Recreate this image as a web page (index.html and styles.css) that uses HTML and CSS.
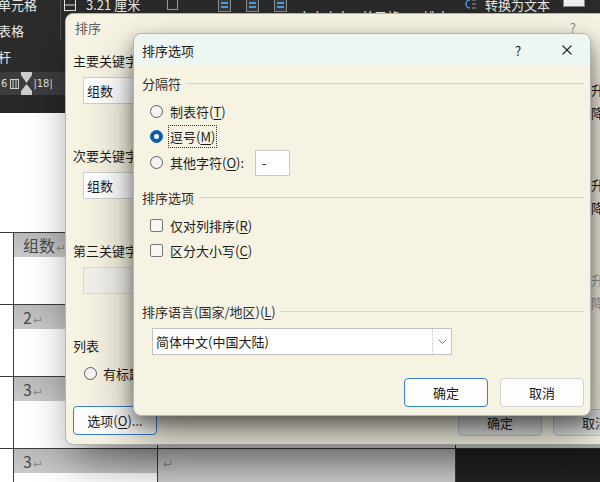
FILE: index.html
```html
<!DOCTYPE html>
<html lang="zh-CN">
<head>
  <meta charset="UTF-8">
  <meta name="viewport" content="width=device-width, initial-scale=1.0">
  <title>排序选项</title>
  <link rel="stylesheet" href="styles.css">
</head>
<body>
  <div class="screen">
    <div class="word">
      <div class="ribbon">
        <div class="rb-first">
          <span>单元格</span>
          <span>表格</span>
          <span>杆</span>
        </div>
        <div class="rb-sep"></div>
        <svg class="rb-icon rb-cell" width="14" height="14" viewBox="0 0 14 14">
          <rect x="1.5" y="1.5" width="11" height="11" fill="none" stroke="#e0e0e0"/>
          <line x1="1.5" y1="7" x2="12.5" y2="7" stroke="#e0e0e0"/>
        </svg>
        <span class="rb-text rb-size">3.21 厘米</span>
        <svg class="rb-icon rb-box" width="13" height="13" viewBox="0 0 13 13">
          <rect x="1.5" y="1.5" width="10" height="10" fill="none" stroke="#9a9a9a"/>
        </svg>
        <div class="rb-aligns">
          <svg width="13" height="13" viewBox="0 0 13 13">
            <rect x="0.5" y="0.5" width="12" height="12" fill="#3a3a3a" stroke="#8a8a8a"/>
            <line x1="3" y1="4" x2="10" y2="4" stroke="#4a9be8" stroke-width="2"/>
            <line x1="3" y1="8" x2="10" y2="8" stroke="#4a9be8" stroke-width="2"/>
          </svg>
          <svg width="13" height="13" viewBox="0 0 13 13">
            <rect x="0.5" y="0.5" width="12" height="12" fill="#3a3a3a" stroke="#8a8a8a"/>
            <line x1="3" y1="4" x2="10" y2="4" stroke="#4a9be8" stroke-width="2"/>
            <line x1="3" y1="8" x2="10" y2="8" stroke="#4a9be8" stroke-width="2"/>
          </svg>
          <svg width="13" height="13" viewBox="0 0 13 13">
            <rect x="0.5" y="0.5" width="12" height="12" fill="#3a3a3a" stroke="#8a8a8a"/>
            <line x1="3" y1="4" x2="10" y2="4" stroke="#4a9be8" stroke-width="2"/>
            <line x1="3" y1="8" x2="10" y2="8" stroke="#4a9be8" stroke-width="2"/>
          </svg>
        </div>
        <span class="rb-text rb-low rb-dir">文字方向</span>
        <span class="rb-text rb-low rb-margin">单元格</span>
        <span class="rb-text rb-low rb-sort">排序</span>
        <svg class="rb-icon rb-convert" width="13" height="13" viewBox="0 0 13 13">
          <path d="M6 2 A4 4 0 1 0 6 10" fill="none" stroke="#4a9be8" stroke-width="1.5"/>
          <line x1="8" y1="2" x2="12" y2="2" stroke="#9a9a9a"/>
          <line x1="8" y1="6" x2="12" y2="6" stroke="#9a9a9a"/>
          <line x1="8" y1="10" x2="12" y2="10" stroke="#9a9a9a"/>
        </svg>
        <span class="rb-text rb-convert-text">转换为文本</span>
        <svg class="rb-icon rb-grid" width="22" height="13" viewBox="0 0 22 13">
          <rect x="0.5" y="0.5" width="21" height="12" fill="#f0f0f0" stroke="#8a8a8a"/>
          <line x1="3" y1="4" x2="19" y2="4" stroke="#4a9be8" stroke-width="2"/>
        </svg>
      </div>

      <div class="ruler">
        <span class="rl-num">6</span>
        <svg class="rl-grid" width="9" height="10" viewBox="0 0 9 10">
          <rect x="0.5" y="0.5" width="8" height="9" fill="none" stroke="#cfcfcf"/>
          <line x1="3" y1="1" x2="3" y2="9" stroke="#cfcfcf"/>
          <line x1="6" y1="1" x2="6" y2="9" stroke="#cfcfcf"/>
        </svg>
        <svg class="rl-indent" width="11" height="24" viewBox="0 0 11 24">
          <rect x="0" y="0" width="11" height="3" fill="#cdcdcd"/>
          <polygon points="0,3 11,3 5.5,11" fill="#cdcdcd"/>
          <polygon points="5.5,12 11,19 0,19" fill="#cdcdcd"/>
          <rect x="0" y="19" width="11" height="5" fill="#cdcdcd"/>
        </svg>
        <span class="rl-num">|18|</span>
        <span class="rl-num rl-far">|2</span>
      </div>
      <div class="ruler-gap"></div>

      <div class="page">
        <table class="doc-table">
          <colgroup>
            <col class="c0"><col class="c1"><col class="c2"><col class="c3">
          </colgroup>
          <tr>
            <td></td>
            <td><div class="cell-line">组数<span class="mark">↵</span></div></td>
            <td></td>
            <td></td>
          </tr>
          <tr>
            <td></td>
            <td><div class="cell-line">2<span class="mark">↵</span></div></td>
            <td></td>
            <td></td>
          </tr>
          <tr>
            <td></td>
            <td><div class="cell-line">3<span class="mark">↵</span></div></td>
            <td></td>
            <td></td>
          </tr>
          <tr>
            <td></td>
            <td><div class="cell-line">3<span class="mark">↵</span></div></td>
            <td class="shaded"><div class="cell-plain"><span class="mark">↵</span></div></td>
            <td class="dark"></td>
          </tr>
        </table>
      </div>
    </div>

    <!-- back dialog -->
    <div class="dialog sort-dialog">
      <div class="sort-title">
        <span>排序</span>
        <span class="sort-help">?</span>
      </div>
      <div class="sort-body">
        <div class="key-block">
          <div class="key-main">
            <div class="key-label">主要关键字</div>
            <div class="key-input">组数</div>
          </div>
          <div class="key-order">
            <div class="order-row"><span class="radio"></span>升序(A)</div>
            <div class="order-row"><span class="radio"></span>降序(D)</div>
          </div>
        </div>
        <div class="key-block">
          <div class="key-main">
            <div class="key-label">次要关键字</div>
            <div class="key-input">组数</div>
          </div>
          <div class="key-order">
            <div class="order-row"><span class="radio"></span>升序(C)</div>
            <div class="order-row"><span class="radio"></span>降序(N)</div>
          </div>
        </div>
        <div class="key-block">
          <div class="key-main">
            <div class="key-label">第三关键字</div>
            <div class="key-input disabled"></div>
          </div>
          <div class="key-order disabled">
            <div class="order-row"><span class="radio"></span>升序(I)</div>
            <div class="order-row"><span class="radio"></span>降序(G)</div>
          </div>
        </div>
        <div class="key-label">列表</div>
        <div class="list-row"><span class="radio"></span>有标题行(R)</div>
        <div class="sort-footer">
          <button class="btn btn-focus">选项(<u>O</u>)...</button>
          <button class="btn btn-back btn-ok">确定</button>
          <button class="btn btn-back">取消</button>
        </div>
      </div>
    </div>

    <!-- front dialog -->
    <div class="dialog options-dialog">
      <div class="opt-title">
        <span class="opt-title-text">排序选项</span>
        <span class="opt-help">?</span>
        <span class="opt-close">
          <svg width="10" height="10" viewBox="0 0 10 10">
            <line x1="0.5" y1="0.5" x2="9.5" y2="9.5" stroke="#222" stroke-width="1.1"/>
            <line x1="9.5" y1="0.5" x2="0.5" y2="9.5" stroke="#222" stroke-width="1.1"/>
          </svg>
        </span>
      </div>
      <div class="opt-body">
        <div class="group-head"><span>分隔符</span></div>
        <div class="opt-list">
          <div class="opt-row"><span class="radio"></span><span>制表符(<u>T</u>)</span></div>
          <div class="opt-row"><span class="radio on"></span><span class="focus">逗号(<u>M</u>)</span></div>
          <div class="opt-row opt-row-other">
            <span class="radio"></span><span>其他字符(<u>O</u>):</span>
            <span class="other-input">-</span>
          </div>
        </div>

        <div class="group-head group-second"><span>排序选项</span></div>
        <div class="opt-list">
          <div class="opt-row"><span class="check"></span><span>仅对列排序(<u>R</u>)</span></div>
          <div class="opt-row"><span class="check"></span><span>区分大小写(<u>C</u>)</span></div>
        </div>

        <div class="group-head group-dotted"><span>排序语言(国家/地区)(<u>L</u>)</span></div>
        <div class="select">
          <span class="select-value">简体中文(中国大陆)</span>
          <span class="select-btn">
            <svg width="9" height="5" viewBox="0 0 9 5">
              <polyline points="0.5,0.5 4.5,4.5 8.5,0.5" fill="none" stroke="#777"/>
            </svg>
          </span>
        </div>

        <div class="opt-actions">
          <button class="btn btn-focus">确定</button>
          <button class="btn">取消</button>
        </div>
      </div>
    </div>
  </div>
</body>
</html>
```

FILE: styles.css
```css
/* page frame */
body {
  margin: 0;
  background: #2b2b2b;
}

.screen {
  position: relative;
  width: 600px;
  height: 482px;
  overflow: hidden;
  font-family: "Noto Sans CJK SC", "Noto Sans", sans-serif;
  font-size: 13px;
  color: #1b1b1b;
}

/* word window behind the dialogs */
.ribbon {
  display: flex;
  align-items: flex-start;
  height: 72px;
  background: #2b2b2b;
  color: #e8e8e8;
  white-space: nowrap;
}

.ribbon > * {
  flex-shrink: 0;
}

.rb-first {
  display: flex;
  flex-direction: column;
  width: 62px;
  margin: -8px 0 0 -2px;
}

.rb-first span,
.rb-text {
  height: 26px;
  line-height: 26px;
}

.rb-text {
  margin-top: -8px;
}

.rb-low {
  margin-top: 4px;
}

.rb-sep {
  width: 1px;
  height: 40px;
  background: #4c4c4c;
}

.rb-icon {
  margin-top: -2px;
}

.rb-cell { margin-left: 2px; }
.rb-size { margin-left: 9px; width: 60px; }
.rb-box { margin-left: 20px; }

.rb-aligns {
  display: flex;
  gap: 15px;
  margin: -1px 0 0 39px;
}

.rb-dir { margin-left: 11px; width: 52px; }
.rb-margin { margin-left: 11px; width: 39px; }
.rb-sort { margin-left: 23px; width: 26px; }
.rb-convert { margin-left: 15px; }
.rb-convert-text { margin-left: 8px; width: 65px; }
.rb-grid { margin-left: 13px; margin-top: -6px; }

.ruler {
  display: flex;
  align-items: center;
  height: 23px;
  background: #3d3d3d;
  color: #dedede;
  font-family: "DejaVu Sans", sans-serif;
  font-size: 10px;
  overflow: hidden;
}

.rl-num {
  margin-left: 1px;
}

.rl-grid {
  margin-left: 3px;
}

.rl-indent {
  margin-left: 2px;
}

.rl-far {
  margin-left: 14px;
}

.ruler-gap {
  height: 18px;
  background: #282828;
}

.page {
  height: 400px;
  background: #fff;
  padding-top: 119px;
}

.doc-table {
  border-collapse: collapse;
  table-layout: fixed;
  width: 695px;
  margin-left: -40px;
}

.doc-table .c0 { width: 53px; }
.doc-table .c1 { width: 144px; }
.doc-table .c2 { width: 298px; }
.doc-table .c3 { width: 200px; }

.doc-table tr {
  height: 72px;
}

.doc-table td {
  border: 1px solid #3a3a3a;
  padding: 0;
  vertical-align: top;
}

.cell-line,
.cell-plain {
  height: 24px;
  line-height: 24px;
  padding-left: 9px;
  font-size: 16px;
  color: #4a4a4a;
}

.cell-line {
  background: linear-gradient(#b9b9b9, #c9c9c9);
}

.cell-plain {
  padding-left: 4px;
}

.mark {
  font-family: "DejaVu Sans", sans-serif;
  font-size: 12px;
  color: #8a8a8a;
  margin-left: 1px;
}

.doc-table td.shaded {
  background-color: #cecece;
}

.doc-table td.dark {
  background-color: #232323;
  border-color: #232323;
}

/* dialogs */
.dialog {
  position: absolute;
  box-sizing: border-box;
  background: #f6f3e3;
  border: 1px solid #b3b3b3;
  border-radius: 8px;
}

.sort-dialog {
  left: 65px;
  top: 13px;
  width: 580px;
  height: 432px;
  box-shadow: 0 24px 40px -8px rgba(0, 0, 0, 0.45);
}

.sort-title {
  display: flex;
  height: 27px;
  line-height: 27px;
  padding-left: 9px;
  color: #5c5c5c;
}

.sort-help {
  margin-left: auto;
  margin-right: 68px;
  color: #8a8a8a;
}

.sort-body {
  padding: 11px 7px 0 7px;
}

.key-block {
  display: flex;
  margin-bottom: 23px;
}

.key-main {
  width: 499px;
}

.key-label {
  height: 18px;
  line-height: 18px;
}

.key-input {
  box-sizing: border-box;
  width: 220px;
  height: 27px;
  line-height: 25px;
  margin: 7px 0 0 10px;
  padding-left: 3px;
  background: #fff;
  border: 1px solid #cfcfcf;
}

.key-input.disabled {
  background: #f1f0ea;
  border-color: #d8d8d8;
}

.key-order {
  padding-top: 26px;
}

.order-row,
.list-row,
.opt-row {
  display: flex;
  align-items: center;
  gap: 6px;
}

.order-row {
  height: 23px;
}

.key-order.disabled {
  color: #a0a0a0;
}

.list-row {
  height: 24px;
  margin: 6px 0 0 11px;
}

.sort-footer {
  display: flex;
  align-items: flex-start;
  margin-top: 21px;
}

.btn {
  box-sizing: border-box;
  width: 84px;
  height: 29px;
  padding: 0;
  font-family: inherit;
  font-size: 13px;
  color: #1b1b1b;
  background: #fdfdfb;
  border: 1px solid #d2d2d2;
  border-radius: 4px;
}

.btn-focus {
  border-color: #3b7fd0;
}

.btn-back {
  height: 27px;
  margin-top: 3px;
  background: #e3e3e3;
  border-color: #c4c4c4;
}

.btn-ok {
  margin-left: auto;
  margin-right: 11px;
}

/* front dialog */
.options-dialog {
  left: 133px;
  top: 33px;
  width: 458px;
  height: 383px;
  box-shadow: 0 8px 16px rgba(0, 0, 0, 0.4), 0 24px 48px rgba(0, 0, 0, 0.4);
}

.opt-title {
  display: flex;
  align-items: center;
  height: 32px;
  padding-left: 8px;
  background: #eef6f2;
  border-radius: 8px 8px 0 0;
}

.opt-help,
.opt-close {
  display: flex;
  justify-content: center;
  width: 46px;
}

.opt-help {
  margin-left: auto;
  margin-right: 3px;
}

.opt-body {
  padding: 8px 6px 0 8px;
}

.group-head {
  display: flex;
  align-items: center;
  gap: 5px;
  height: 18px;
  color: #2d2d2d;
}

.group-head::after {
  content: '';
  flex: 1;
  border-top: 1px solid #d6d4c8;
}

.group-second {
  margin-top: 12px;
}

.group-dotted {
  margin-top: 39px;
}

.group-dotted::after {
  border-top: 1px dotted #b8b8b8;
}

.opt-list {
  padding: 7px 0 0 8px;
}

.opt-row {
  height: 25px;
  gap: 7px;
}

.opt-row-other {
  height: 27px;
}

u {
  text-underline-offset: 2px;
}

.radio {
  flex-shrink: 0;
  box-sizing: border-box;
  width: 13px;
  height: 13px;
  border: 1px solid #5e5e5e;
  border-radius: 50%;
  background: #f4f4f2;
}

.radio.on {
  display: flex;
  align-items: center;
  justify-content: center;
  background: #0b5cad;
  border-color: #0b5cad;
}

.radio.on::after {
  content: '';
  width: 5px;
  height: 5px;
  border-radius: 50%;
  background: #fff;
}

.check {
  flex-shrink: 0;
  box-sizing: border-box;
  width: 13px;
  height: 13px;
  border: 1px solid #777;
  border-radius: 2px;
  background: #f7f6f0;
}

.focus {
  outline: 1px dotted #333;
  outline-offset: 1px;
}

.other-input {
  box-sizing: border-box;
  width: 35px;
  height: 26px;
  line-height: 24px;
  margin-left: 4px;
  padding-left: 6px;
  background: #fff;
  border: 1px solid #c9c9c9;
}

.select {
  display: flex;
  box-sizing: border-box;
  width: 300px;
  height: 27px;
  margin: 8px 0 0 10px;
  background: #fff;
  border: 1px solid #c2c2c2;
}

.select-value {
  flex: 1;
  line-height: 25px;
  padding-left: 3px;
}

.select-btn {
  display: flex;
  align-items: center;
  justify-content: center;
  width: 18px;
  border-left: 1px dotted #c4c4c4;
}

.opt-actions {
  display: flex;
  justify-content: flex-end;
  gap: 12px;
  margin-top: 23px;
}
```
